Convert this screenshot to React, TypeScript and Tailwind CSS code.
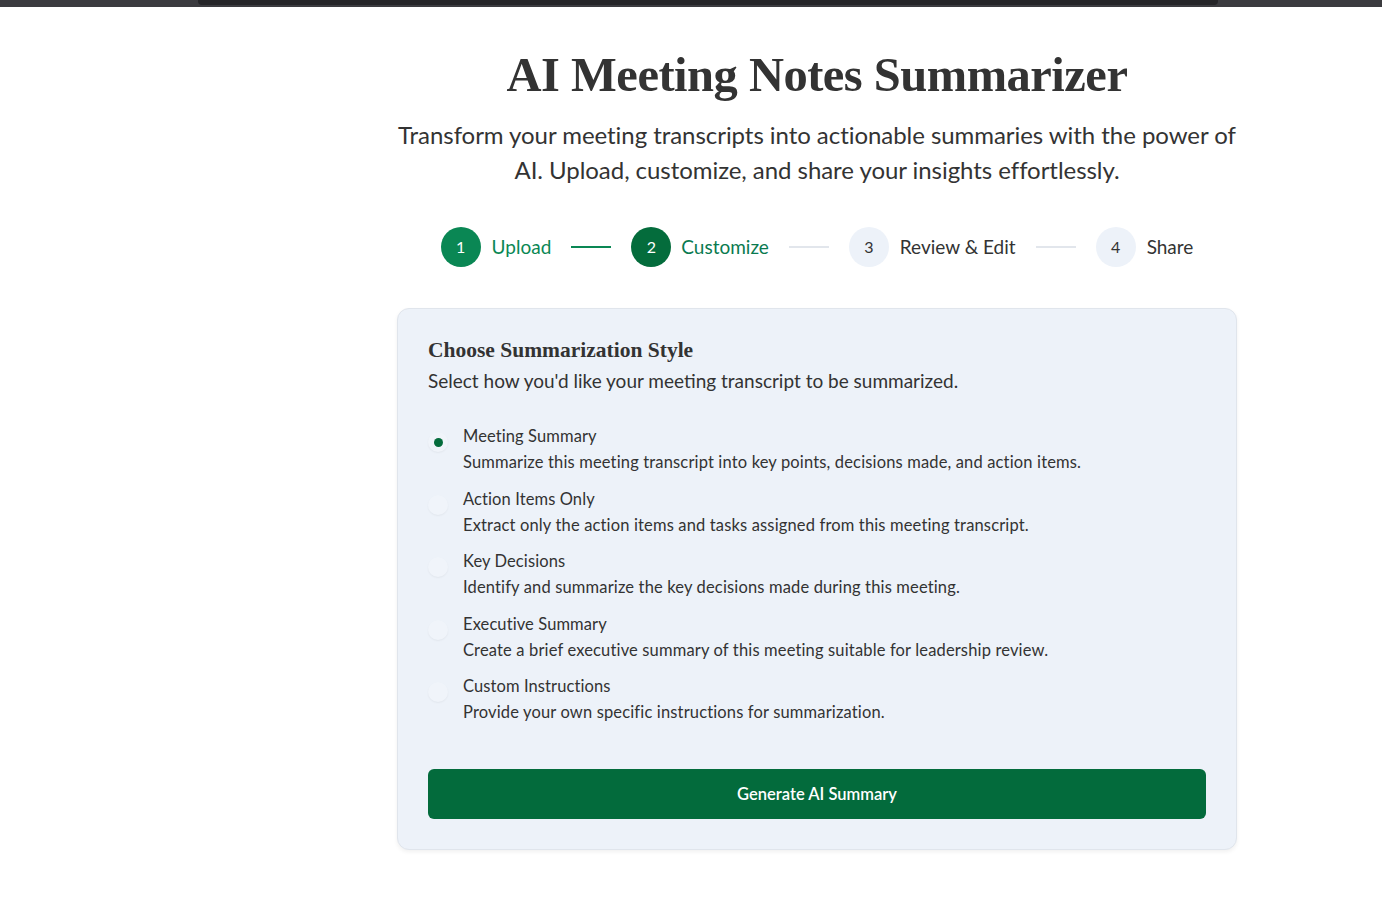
import React from "react";

const sans = "font-['Lato','Noto_Sans',sans-serif]";
const serif = "font-['Liberation_Serif','DejaVu_Serif',serif]";

const options = [
  { title: "Meeting Summary", desc: "Summarize this meeting transcript into key points, decisions made, and action items." },
  { title: "Action Items Only", desc: "Extract only the action items and tasks assigned from this meeting transcript." },
  { title: "Key Decisions", desc: "Identify and summarize the key decisions made during this meeting." },
  { title: "Executive Summary", desc: "Create a brief executive summary of this meeting suitable for leadership review." },
  { title: "Custom Instructions", desc: "Provide your own specific instructions for summarization." },
];

export default function App() {
  return (
    <div className={`min-h-[901px] bg-white ${sans} text-[#333333]`}>
      <div className="h-[7px] bg-[#3b3b3f] flex">
        <div className="ml-[198px] w-[1020px] h-[5px] bg-[#252528] rounded-b-[4px]" />
      </div>
      <div className="flex">
        <div className="w-[252px] shrink-0" />
        <main className="flex-1 flex flex-col items-center">
          <div className="w-[840px] flex flex-col items-center">
            <h1 className={`${serif} mt-[39px] text-[48.5px] leading-[58px] font-bold text-[#333333] tracking-[-0.5px]`}>
              AI Meeting Notes Summarizer
            </h1>
            <p className="mt-[13px] text-[24px] leading-[35px] text-center text-[#333333] tracking-[-0.05px] whitespace-nowrap">
              Transform your meeting transcripts into actionable summaries with the power of
              <br />
              AI. Upload, customize, and share your insights effortlessly.
            </p>

            <div className="mt-[40px] flex items-center h-[40px]">
              <div className="flex items-center gap-[11px]">
                <div className="w-[40px] h-[40px] rounded-full bg-[#0a8754] text-white flex items-center justify-center text-[16px]">1</div>
                <span className="text-[19px] text-[#0a8754]">Upload</span>
              </div>
              <div className="mx-[20px] w-[40px] h-[2px] bg-[#0a8754]" />
              <div className="flex items-center gap-[10px]">
                <div className="w-[40px] h-[40px] rounded-full bg-[#046c3c] text-white flex items-center justify-center text-[16px]">2</div>
                <span className="text-[19px] text-[#0a7a50]">Customize</span>
              </div>
              <div className="mx-[20px] w-[40px] h-[2px] bg-[#e2e6ec]" />
              <div className="flex items-center gap-[11px]">
                <div className="w-[40px] h-[40px] rounded-full bg-[#edf2f9] text-[#333333] flex items-center justify-center text-[16px]">3</div>
                <span className="text-[19px] text-[#333333]">Review &amp; Edit</span>
              </div>
              <div className="mx-[20px] w-[40px] h-[2px] bg-[#e2e6ec]" />
              <div className="flex items-center gap-[11px]">
                <div className="w-[40px] h-[40px] rounded-full bg-[#edf2f9] text-[#333333] flex items-center justify-center text-[16px]">4</div>
                <span className="text-[19px] text-[#333333]">Share</span>
              </div>
            </div>

            <section className="mt-[41px] w-full rounded-[12px] border border-[#e0e5ec] bg-[#edf2f9] shadow-[0_2px_4px_rgba(0,0,0,0.06)] px-[30px] pt-[27px] pb-[30px]">
              <h2 className={`${serif} text-[21.5px] leading-[28px] font-bold text-[#333333]`}>
                Choose Summarization Style
              </h2>
              <p className="mt-[3px] text-[19px] leading-[28px] text-[#333333]">
                Select how you'd like your meeting transcript to be summarized.
              </p>
              <div className="mt-[29px] flex flex-col gap-[12.5px]">
                {options.map((o, i) => (
                  <div key={o.title} className="flex items-start gap-[15px]">
                    <div className="mt-[8px] w-[20px] h-[20px] rounded-full bg-[#f0f4fa] shadow-[0_1px_2px_rgba(0,0,0,0.05)] flex items-center justify-center shrink-0">
                      {i === 0 && <div className="w-[9px] h-[9px] rounded-full bg-[#046c3c]" />}
                    </div>
                    <div>
                      <div className="text-[16.5px] leading-[24px] text-[#333333] tracking-[0.1px]">{o.title}</div>
                      <div className="mt-[2px] text-[16.5px] leading-[24px] text-[#333333] tracking-[0.15px]">{o.desc}</div>
                    </div>
                  </div>
                ))}
              </div>
              <button className="mt-[45px] w-full h-[50px] rounded-[6px] bg-[#036b3c] text-white text-[16.5px] font-semibold">
                Generate AI Summary
              </button>
            </section>
          </div>
        </main>
      </div>
    </div>
  );
}
